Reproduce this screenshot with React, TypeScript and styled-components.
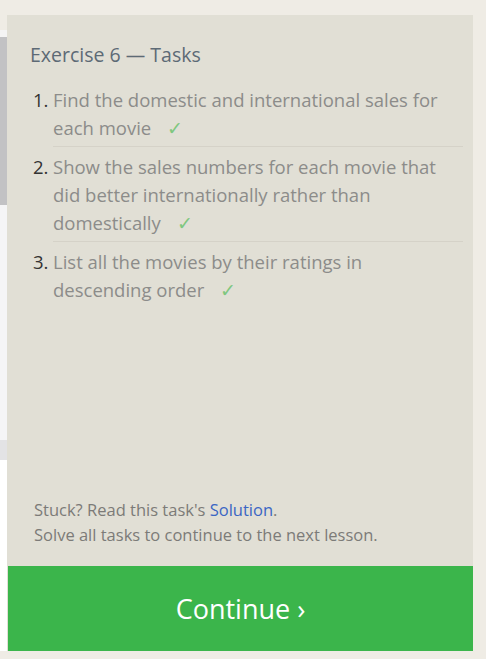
import React from "react";
import styled, { createGlobalStyle } from "styled-components";

const Global = createGlobalStyle`
  html, body { margin: 0; padding: 0; background: #efece5; }
  body { font-family: "Open Sans", "Noto Sans", sans-serif; }
`;

const Page = styled.div`
  width: 486px;
  height: 659px;
  display: flex;
  background: #efece5;
  overflow: hidden;
`;

const SidePane = styled.div`
  width: 7px;
  display: flex;
  flex-direction: column;
  padding-top: 30px;
`;

const SideSeg = styled.div<{ $h: number; $bg: string }>`
  height: ${(p) => p.$h}px;
  background: ${(p) => p.$bg};
  flex-shrink: 0;
`;

const Panel = styled.section`
  margin-top: 15px;
  width: 466px;
  height: 636px;
  background: #e1dfd5;
  display: flex;
  flex-direction: column;
`;

const Title = styled.h2`
  margin: 0;
  padding: 27px 0 0 23px;
  font-size: 19.5px;
  font-weight: 400;
  line-height: 26px;
  color: #5d6a75;
`;

const List = styled.ol`
  margin: 15px 10px 0 0;
  padding: 0 0 0 46px;
  list-style: none;
  counter-reset: task;
`;

const Item = styled.li`
  position: relative;
  counter-increment: task;
  font-size: 18.5px;
  line-height: 28px;
  color: #8c8c8a;
  padding: 3px 0 4px;
  & + & {
    border-top: 1px solid #d5d2c8;
    padding-top: 6px;
  }
  &::before {
    content: counter(task) ".";
    position: absolute;
    left: -20px;
    color: #333;
  }
`;

const TaskText = styled.span`
  color: #8c8c8a;
`;

const Check = styled.span`
  display: inline-block;
  line-height: 18px;
  font-family: "Open Sans", sans-serif;
  color: #7fc77f;
  margin-left: 16px;
`;

const Spacer = styled.div`
  flex: 1;
`;

const Footer = styled.div`
  padding: 0 0 19px 27px;
  font-size: 16.5px;
  line-height: 25px;
  color: #7c7b78;
`;

const Link = styled.a`
  color: #3b66c4;
  text-decoration: none;
`;

const ContinueButton = styled.button`
  height: 85px;
  border: none;
  margin: 0 0 0 1px;
  background: #3bb54b;
  color: #fff;
  font-family: "Open Sans", "Noto Sans", sans-serif;
  font-size: 27px;
  display: flex;
  align-items: center;
  justify-content: center;
  padding: 0;
`;

const tasks = [
  "Find the domestic and international sales for each movie",
  "Show the sales numbers for each movie that did better internationally rather than domestically",
  "List all the movies by their ratings in descending order",
];

export default function App() {
  return (
    <>
      <Global />
      <Page>
        <SidePane>
          <SideSeg $h={7} $bg="#f4f4f4" />
          <SideSeg $h={168} $bg="#c2c2c4" />
          <SideSeg $h={235} $bg="#f5f5f6" />
          <SideSeg $h={20} $bg="#e3e3e5" />
          <SideSeg $h={191} $bg="#ffffff" />
        </SidePane>
        <Panel>
          <Title>Exercise 6 — Tasks</Title>
          <List>
            {tasks.map((t) => (
              <Item key={t}>
                <TaskText>{t}</TaskText>
                <Check>✓</Check>
              </Item>
            ))}
          </List>
          <Spacer />
          <Footer>
            Stuck? Read this task's <Link href="#">Solution</Link>.
            <br />
            Solve all tasks to continue to the next lesson.
          </Footer>
          <ContinueButton>Continue ›</ContinueButton>
        </Panel>
      </Page>
    </>
  );
}
